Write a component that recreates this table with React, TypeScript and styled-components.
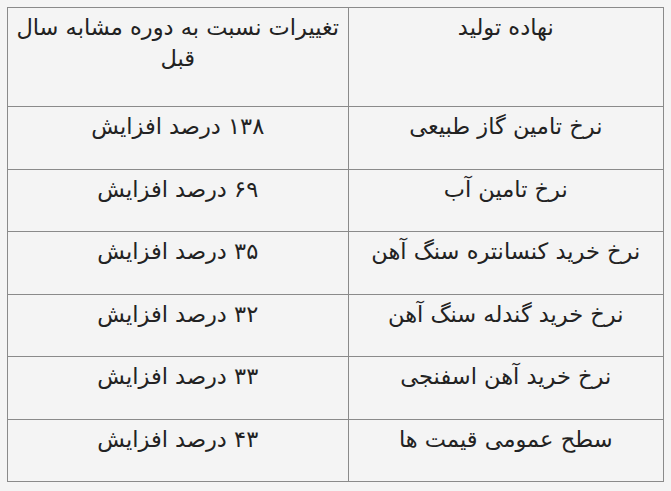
import React from "react";
import styled, { createGlobalStyle } from "styled-components";

const GlobalStyle = createGlobalStyle`
  html, body {
    margin: 0;
    padding: 0;
    background: #f4f4f4;
  }
  body {
    font-family: "DejaVu Sans", "Noto Sans", sans-serif;
    color: #222;
  }
`;

const StPage = styled.main`
  padding: 7px 7px 0 7px;
  direction: rtl;
`;

const StTable = styled.table`
  width: 657px;
  border-collapse: collapse;
  direction: rtl;
`;

const StCell = styled.td<{ $head?: boolean; $side?: "right" | "left" }>`
  border: 1px solid #8a8a8a;
  height: ${(p) => (p.$head ? 99 : 62.5)}px;
  width: ${(p) => (p.$side === "right" ? 315 : 340)}px;
  padding: 4px 8px 0;
  box-sizing: border-box;
  vertical-align: top;
  text-align: center;
  font-size: 22.5px;
  line-height: 31px;
`;

const rows = [
  ["نرخ تامین گاز طبیعی", "۱۳۸ درصد افزایش"],
  ["نرخ تامین آب", "۶۹ درصد افزایش"],
  ["نرخ خرید کنسانتره سنگ آهن", "۳۵ درصد افزایش"],
  ["نرخ خرید گندله سنگ آهن", "۳۲ درصد افزایش"],
  ["نرخ خرید آهن اسفنجی", "۳۳ درصد افزایش"],
  ["سطح عمومی قیمت ها", "۴۳ درصد افزایش"],
];

export default function App() {
  return (
    <StPage>
      <GlobalStyle />
      <StTable>
        <tbody>
          <tr>
            <StCell $head $side="right">نهاده تولید</StCell>
            <StCell $head $side="left">تغییرات نسبت به دوره مشابه سال قبل</StCell>
          </tr>
          {rows.map(([input, change]) => (
            <tr key={input}>
              <StCell $side="right">{input}</StCell>
              <StCell $side="left">{change}</StCell>
            </tr>
          ))}
        </tbody>
      </StTable>
    </StPage>
  );
}
